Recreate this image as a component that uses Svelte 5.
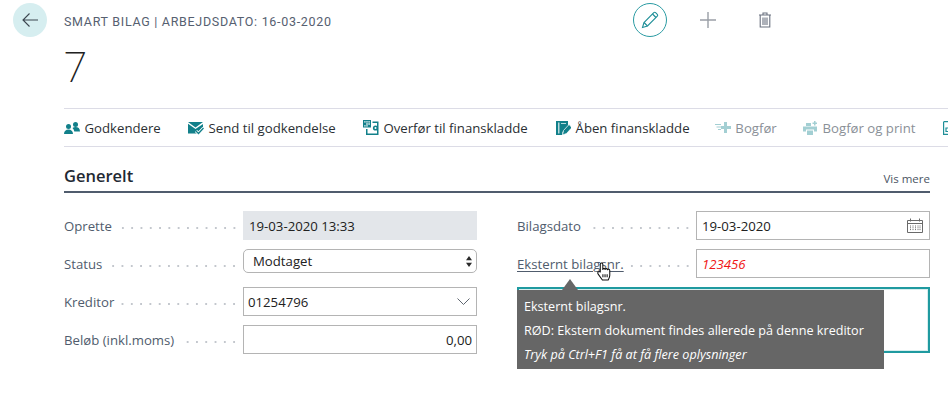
<script>
	const actions = [
		{ label: 'Godkendere', icon: 'people' },
		{ label: 'Send til godkendelse', icon: 'send' },
		{ label: 'Overfør til finanskladde', icon: 'transfer' },
		{ label: 'Åben finanskladde', icon: 'journal' },
		{ label: 'Bogfør', icon: 'post', disabled: true },
		{ label: 'Bogfør og print', icon: 'print', disabled: true }
	]
</script>

<div class="page">
	<header class="top">
		<button class="back" aria-label="Tilbage">
			<svg width="16" height="14" viewBox="0 0 16 14" fill="none" stroke="#3c4650" stroke-width="1.1">
				<path d="M16 7H1M7.500 .5 1 7l6.500 6.500" />
			</svg>
		</button>
		<div class="crumb">SMART BILAG | ARBEJDSDATO: 16-03-2020</div>
		<div class="tools">
			<button class="edit" aria-label="Rediger">
				<svg width="18" height="18" viewBox="0 0 18 18" fill="none" stroke="#1f8f98" stroke-width="1.1">
					<path d="M1.500 16.500 3 11.500 12.800 1.700a1.300 1.300 0 0 1 1.800 0l1.700 1.700a1.300 1.300 0 0 1 0 1.800L6.500 15Z" />
					<path d="M3 11.500 6.500 15M11.500 3l3.500 3.500" />
				</svg>
			</button>
			<svg class="plus" width="18" height="18" viewBox="0 0 18 18" stroke="#9a9fa6" stroke-width="1.4">
				<path d="M9 1v16M1 9h16" />
			</svg>
			<svg class="trash" width="14" height="16" viewBox="0 0 14 16" fill="none" stroke="#6b7280" stroke-width="1.1">
				<path d="M1 3h12M5 3V1h4v2M2.200 3v12h9.600V3M5 5.500v7.500M7 5.500v7.500M9 5.500v7.500" />
			</svg>
		</div>
	</header>

	<h1>7</h1>

	<nav class="actions">
		{#each actions as a}
			<span class="action" class:disabled={a.disabled}>
				<svg width="16" height="16" viewBox="0 0 16 16" class="ico">
					{#if a.icon === 'people'}
						<circle cx="4.500" cy="6.500" r="2.500" />
						<circle cx="11.500" cy="4.500" r="2.500" />
						<path d="M0 14c0-3 2-4.500 4.500-4.500S9 11 9 14ZM8.500 8c.8-.6 1.800-1 3-1 2.700 0 4.500 1.400 4.500 4.500h-5.700C10 10 9.400 8.800 8.500 8Z" />
					{:else if a.icon === 'send'}
						<path d="M0 2h15L7.500 7.500ZM0 3.800 7.500 9 15 4v3l-6 6.500H0Z" />
						<path d="m8 11 2.500 2.500L15.500 8" fill="none" stroke="#fff" stroke-width="3" />
						<path d="m8 11 2.500 2.500L15.500 8" fill="none" stroke="currentColor" stroke-width="1.300" />
					{:else if a.icon === 'transfer'}
						<path d="M0 0h8v7.500H0Z" />
						<path d="M1.200 1.200h1.400v1.400H1.200ZM3.300 1.200h1.400v1.400H3.300ZM5.400 1.200h1.400v1.400H5.400ZM3.300 3.300h1.400v1.400H3.300ZM5.400 3.300h1.400v1.400H5.400ZM1.200 5.200h1.400v1.400H1.200ZM3.300 5.200h1.400v1.400H3.300Z" fill="#fff" />
						<path d="M9.500 1.500H15.500V15H3V9h1.500v4.500h9.500V3H9.500Z" />
						<circle cx="12.500" cy="8" r="2.600" />
						<circle cx="12.500" cy="8" r="1" fill="#fff" />
					{:else if a.icon === 'journal'}
						<path d="M1 1h12v5L7.500 12v3H1Z" />
						<path d="M3 2.500v11h1.500v-11ZM6 3h5v1H6Z" fill="#fff" opacity=".7" />
						<path d="M14 4.500 8.500 10.500 7.500 15l4-1.500L17 7.500Z" stroke="#fff" stroke-width=".7" />
					{:else if a.icon === 'post'}
						<path d="M0 4h6v1H0ZM1.500 6.500h4.500v1H1.500ZM3 9h3v1H3Z" />
						<path d="M9 2h3v4h4v3h-4v4H9V9H6V6h3Z" />
					{:else}
						<path d="M4 3h5v3H4ZM1 6.500h14v5h-3V9.500H4v2H1ZM5 10.500h6V15H5Z" />
						<path d="M12 1h1.500v1.500H15V4h-1.500v1.500H12V4h-1.500V2.500H12Z" />
					{/if}
				</svg>
				{a.label}
			</span>
		{/each}
		<svg class="more" width="6" height="14" viewBox="0 0 6 14" fill="none" stroke="#1f8f98" stroke-width="1.200">
			<path d="M1 .6h5M.6 .6v12.800h5.400M3 7h3v3.500H3Z" />
		</svg>
	</nav>

	<section class="general">
		<div class="section-head">
			<h2>Generelt</h2>
			<span class="vis">Vis mere</span>
		</div>

		<div class="columns">
			<div class="col">
				<div class="field">
					<span class="label"><span>Oprette</span><i></i></span>
					<div class="box readonly"><span>19-03-2020 13:33</span></div>
				</div>
				<div class="field">
					<span class="label"><span>Status</span><i></i></span>
					<div class="box select">
						<span>Modtaget</span>
						<svg width="6" height="13" viewBox="0 0 7 13" fill="#2b2b2b">
							<path d="M3.500 0 7 5H0ZM3.500 13 0 8h7Z" />
						</svg>
					</div>
				</div>
				<div class="field">
					<span class="label"><span>Kreditor</span><i></i></span>
					<div class="box lookup">
						<span>01254796</span>
						<svg width="13" height="7" viewBox="0 0 13 7" fill="none" stroke="#5f6670" stroke-width="1">
							<path d="m.5 .5 6 6 6-6" />
						</svg>
					</div>
				</div>
				<div class="field">
					<span class="label"><span>Beløb (inkl.moms)</span><i></i></span>
					<div class="box number"><span>0,00</span></div>
				</div>
			</div>

			<div class="col">
				<div class="field">
					<span class="label"><span>Bilagsdato</span><i></i></span>
					<div class="box">
						<span>19-03-2020</span>
						<svg width="16" height="15" viewBox="0 0 16 15" fill="none" stroke="#6a6a6a" stroke-width="1">
							<path d="M.5 2.500h15v12H.5ZM.5 5.500h15M3.500 .5v3M12.500 .5v3" />
							<path d="M3.500 7.500v5M6 7.500v5M8.500 7.500v5M11 7.500v5M13 7.500v5" stroke-dasharray="1 .8" />
						</svg>
					</div>
				</div>
				<div class="field">
					<span class="label"><span class="link">Eksternt bilagsnr.</span><i></i></span>
					<div class="box"><span class="bad">123456</span></div>
				</div>
				<div class="notes">
					<div class="tip">
						<p>Eksternt bilagsnr.</p>
						<p>RØD: Ekstern dokument findes allerede på denne kreditor</p>
						<p><em>Tryk på Ctrl+F1 få at få flere oplysninger</em></p>
					</div>
				</div>
				<svg class="hand" width="17" height="19" viewBox="0 0 16 18" stroke="#111" stroke-width="1" stroke-linejoin="round">
					<path fill="#fff" d="M4 9V2.200a1.200 1.200 0 0 1 2.400 0V7c0-1.200 2.200-1.200 2.200 0 0-1 2.200-1 2.200 .3 0-.8 2.200-.8 2.200 .7v4.500c0 2-1 3.500-1.500 4.500H6L2 11.500C.8 10 2.500 8 4 9.500Z" />
					<path fill="none" d="M6.500 11.500v3M8.500 11.500v3M10.500 11.500v3" />
				</svg>
			</div>
		</div>
	</section>
</div>

<style>
	:global(body) {
		margin: 0;
		background: #fff;
		overflow: hidden;
	}

	.page {
		width: 948px;
		height: 406px;
		overflow: hidden;
		font-family: 'Open Sans', 'Noto Sans', sans-serif;
		font-size: 13px;
		color: #212121;
	}

	button {
		padding: 0;
		border: 0;
		background: none;
	}

	.top {
		display: flex;
		align-items: center;
		height: 34px;
		padding: 3px 0 0 13px;
	}

	.back {
		display: flex;
		align-items: center;
		justify-content: center;
		width: 34px;
		height: 34px;
		border-radius: 50%;
		background: #d6eef0;
	}

	.crumb {
		width: 302px;
		margin-left: 17px;
		padding-top: 2px;
		font-family: Roboto, sans-serif;
		font-size: 12.5px;
		letter-spacing: 0.7px;
		color: #566070;
		white-space: nowrap;
	}

	.tools {
		display: flex;
		align-items: center;
		margin-left: 267px;
	}

	.edit {
		display: flex;
		align-items: center;
		justify-content: center;
		width: 34px;
		height: 34px;
		border: 1px solid #2a9ba3;
		border-radius: 50%;
		box-sizing: border-box;
	}

	.plus {
		margin-left: 32px;
	}

	.trash {
		margin-left: 41px;
	}

	h1 {
		margin: 6px 0 0 64px;
		height: 65px;
		font-family: Roboto, sans-serif;
		font-size: 42px;
		line-height: 50px;
		font-weight: 200;
		color: #212121;
	}

	.actions {
		display: flex;
		align-items: center;
		gap: 27.3px;
		height: 37px;
		margin-left: 64px;
		border-top: 1px solid #dcdce6;
		border-bottom: 1px solid #dcdce6;
		white-space: nowrap;
	}

	.action {
		display: flex;
		align-items: center;
		gap: 4.5px;
		font-size: 13.2px;
		color: #2b2f33;
	}

	.ico {
		color: #12808a;
		fill: currentColor;
	}

	.action.disabled {
		margin-left: -2px;
		color: #8a9097;
	}

	.action.disabled .ico {
		color: #a3cfd3;
	}

	.more {
		flex: none;
	}

	.general {
		width: 866px;
		margin-left: 64px;
	}

	.section-head {
		display: flex;
		align-items: flex-end;
		justify-content: space-between;
		height: 46px;
		padding-bottom: 4px;
		border-bottom: 2px solid #505c6d;
		box-sizing: border-box;
	}

	h2 {
		margin: 0;
		margin-bottom: -1px;
		font-family: 'Open Sans', sans-serif;
		font-size: 16.5px;
		line-height: 24px;
		font-weight: 600;
		color: #1f2933;
	}

	.vis {
		font-size: 11.5px;
		line-height: 16px;
		color: #4b5563;
	}

	.columns {
		display: grid;
		grid-template-columns: 413px 413px;
		gap: 40px;
		margin-top: 18px;
	}

	.col {
		position: relative;
		display: flex;
		flex-direction: column;
		gap: 9px;
	}

	.field {
		display: flex;
		height: 29px;
	}

	.label {
		display: flex;
		align-items: center;
		width: 179px;
		flex: none;
		padding-top: 1px;
		box-sizing: border-box;
		color: #505c6d;
		font-size: 13.2px;
		white-space: nowrap;
	}

	.label i {
		flex: 1;
		height: 2px;
		margin: 3px 4px 0 6px;
		background: radial-gradient(circle, #c3c7cd 0.7px, transparent 1px) right center / 9.3px 2px repeat-x;
	}

	.link {
		text-decoration: underline;
		text-underline-offset: 2px;
	}

	.box {
		display: flex;
		align-items: center;
		justify-content: space-between;
		flex: 1;
		padding: 0 6px 0 5px;
		border: 1px solid #b4b4b4;
		box-sizing: border-box;
		font-size: 13.2px;
		color: #212121;
	}

	.readonly {
		border-color: #e3e6ea;
		background: #e3e6ea;
	}

	.select {
		height: 24px;
		padding: 0 4px 0 9px;
		border-radius: 5px;
	}

	.lookup {
		padding-left: 4px;
	}

	.number {
		justify-content: flex-end;
		padding-right: 4px;
	}

	.bad {
		color: #f01414;
		font-style: italic;
	}

	.notes {
		position: relative;
		height: 66px;
		border: 2px solid #1f9aa0;
		box-sizing: border-box;
		box-shadow: inset 0 0 0 1px #d8eeee;
	}

	.tip {
		position: absolute;
		top: 1px;
		left: -2px;
		width: 367px;
		height: 79px;
		padding: 5px 7px 0;
		box-sizing: border-box;
		background: #666;
		color: #fff;
		font-size: 12.6px;
	}

	.tip::before {
		content: '';
		position: absolute;
		top: -11px;
		left: 45px;
		border: 8px solid transparent;
		border-top: 0;
		border-bottom: 11px solid #666;
	}

	.tip p {
		margin: 0;
		line-height: 24px;
	}

	.hand {
		position: absolute;
		left: 79px;
		top: 51px;
	}
</style>
